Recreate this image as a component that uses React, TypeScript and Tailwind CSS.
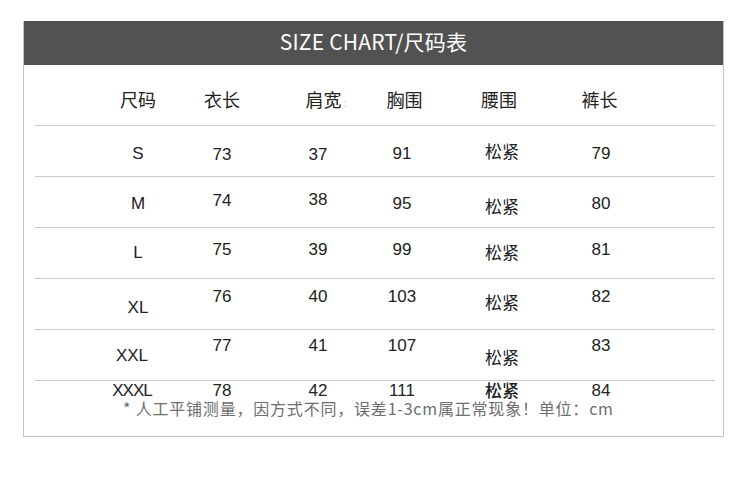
const cjk = "font-['Noto_Sans_CJK_SC',sans-serif]";
const latin = "font-['Liberation_Sans','Noto_Sans_CJK_SC',sans-serif]";

// per-cell top margins copied off the reference, the rows are not evenly aligned
const rows = [
  { size: "S", sizeMt: "mt-[19px]", sizeX: "", vals: ["73", "37", "91"], valMt: ["mt-[20px]", "mt-[20px]", "mt-[19px]"], fitMt: "mt-[16px]", pants: "79", pantsMt: "mt-[19px]" },
  { size: "M", sizeMt: "mt-[18px]", sizeX: "", vals: ["74", "38", "95"], valMt: ["mt-[15px]", "mt-[14px]", "mt-[18px]"], fitMt: "mt-[20px]", pants: "80", pantsMt: "mt-[18px]" },
  { size: "L", sizeMt: "mt-[16px]", sizeX: "", vals: ["75", "39", "99"], valMt: ["mt-[13px]", "mt-[13px]", "mt-[13px]"], fitMt: "mt-[15px]", pants: "81", pantsMt: "mt-[13px]" },
  { size: "XL", sizeMt: "mt-[20px]", sizeX: "", vals: ["76", "40", "103"], valMt: ["mt-[9px]", "mt-[9px]", "mt-[9px]"], fitMt: "mt-[14px]", pants: "82", pantsMt: "mt-[9px]" },
  { size: "XXL", sizeMt: "mt-[17px]", sizeX: "pr-[12px]", vals: ["77", "41", "107"], valMt: ["mt-[7px]", "mt-[7px]", "mt-[7px]"], fitMt: "mt-[18px]", pants: "83", pantsMt: "mt-[7px]" },
];

const cols = "grid grid-cols-[80px_88px_104px_64px_136px_62px] pl-[63px] items-start";

export default function App() {
  return (
    <div className="w-[750px] h-[501px] bg-white pt-[21px] pl-[23px] text-[#222]">
      <div className="w-[701px] h-[416px] border border-t-0 border-[#c4c4c4] flex flex-col">
        <div className={`h-[44px] bg-[#525252] flex items-center justify-center pb-[4px] text-white text-[21px] leading-none tracking-[0.2px] ${cjk}`}>
          SIZE CHART/尺码表
        </div>

        <div className="pl-[11px] pr-[8px] flex flex-col">
          {/* header row */}
          <div className={`${cols} h-[61px] border-b border-[#cacaca] text-[18px] leading-none ${cjk}`}>
            <div className="text-center mt-[25px]">尺码</div>
            <div className="text-center mt-[25px]">衣长</div>
            <div className="text-center mt-[25px] pl-[16px]">肩宽<span className="text-[#d6d6d6] text-[11px] ml-[2px]">:</span></div>
            <div className="text-center mt-[25px] pl-[5px]">胸围</div>
            <div className="text-center mt-[25px] pr-[6px]">腰围</div>
            <div className="text-center mt-[25px] pr-[3px]">裤长</div>
          </div>

          {rows.map((r) => (
            <div key={r.size} className={`${cols} h-[51px] border-b border-[#cacaca] text-[17px] leading-none ${latin}`}>
              <div className={`text-center ${r.sizeMt} ${r.sizeX}`}>{r.size}</div>
              {r.vals.map((v, i) => (
                <div key={i} className={`text-center ${r.valMt[i]}`}>{v}</div>
              ))}
              <div className={`text-center ${r.fitMt} ${cjk}`}>松紧</div>
              <div className={`text-center ${r.pantsMt}`}>{r.pants}</div>
            </div>
          ))}

          {/* last row sits right on top of the note */}
          <div className={`${cols} h-[17px] text-[17px] leading-none ${latin}`}>
            <div className="text-center mt-[1px] pr-[12px] tracking-[-1px] font-medium">XXXL</div>
            <div className="text-center mt-[1px]">78</div>
            <div className="text-center mt-[1px]">42</div>
            <div className="text-center mt-[1px]">111</div>
            <div className={`text-center ${cjk} font-medium`}>松紧</div>
            <div className="text-center mt-[1px]">84</div>
          </div>

          <div className={`mt-[2px] pl-[88px] text-[16px] leading-none tracking-[0.8px] text-[#6e6e6e] ${cjk}`}>
            * 人工平铺测量，因方式不同，误差1-3cm属正常现象！单位：cm
          </div>
        </div>
      </div>
    </div>
  );
}
